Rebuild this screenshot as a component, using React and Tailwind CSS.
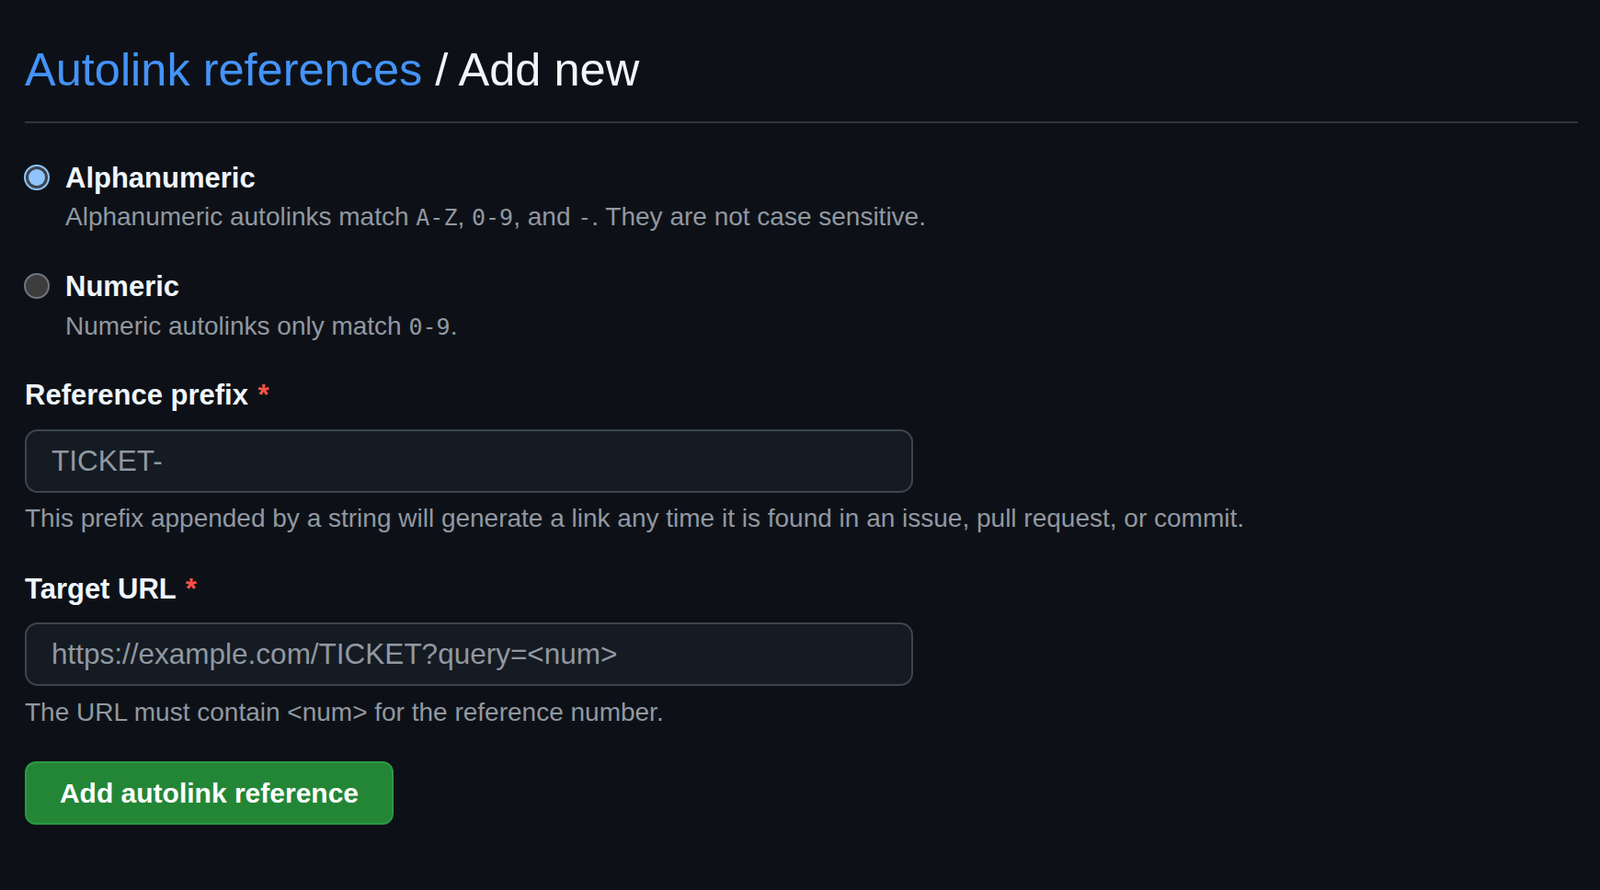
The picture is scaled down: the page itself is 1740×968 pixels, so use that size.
import React from "react";

function Radio({ checked }) {
  if (checked) {
    return (
      <span className="ml-[-1px] mt-[3px] flex h-[28px] w-[28px] shrink-0 items-center justify-center rounded-full border-2 border-[#8fc4ff] bg-[#3d444d]">
        <span className="h-[18px] w-[18px] rounded-full bg-[#8fc4ff]" />
      </span>
    );
  }
  return (
    <span className="ml-[-1px] mt-[3px] h-[28px] w-[28px] shrink-0 rounded-full border-2 border-[#6e7681] bg-[#3d3d3d]" />
  );
}

function Code({ children }) {
  return <span className="font-['DejaVu_Sans_Mono',monospace] text-[25px]">{children}</span>;
}

export default function App() {
  return (
    <div className="min-h-[968px] bg-[#0d1117] pl-[27px] pr-[24px] pt-[46px] font-['Liberation_Sans',Arial,sans-serif] text-[#f0f6fc]">
      <h1 className="border-b-2 border-[#2f353d] pb-[26px] text-[50.5px] leading-[60px] font-normal">
        <span className="text-[#4493f8]">Autolink references</span>
        <span> / Add new</span>
      </h1>

      <div className="mt-[42px] flex items-start gap-[17px]">
        <Radio checked />
        <div>
          <div className="text-[31px] font-bold leading-[36px]">Alphanumeric</div>
          <div className="mt-[6px] text-[28px] leading-[36px] text-[#9198a1]">
            Alphanumeric autolinks match <Code>A-Z</Code>, <Code>0-9</Code>, and <Code>-</Code>. They are not case sensitive.
          </div>
        </div>
      </div>

      <div className="mt-[39px] flex items-start gap-[17px]">
        <Radio />
        <div>
          <div className="text-[31px] font-bold leading-[36px]">Numeric</div>
          <div className="mt-[7px] text-[28px] leading-[36px] text-[#9198a1]">
            Numeric autolinks only match <Code>0-9</Code>.
          </div>
        </div>
      </div>

      <div className="mt-[38px]">
        <div className="text-[31px] font-bold leading-[36px]">
          Reference prefix <span className="ml-[2px] text-[#f85149]">*</span>
        </div>
        <input
          className="mt-[19px] block h-[69px] w-[966px] rounded-[14px] border-2 border-[#3d444d] bg-[#151b23] px-[27px] text-[31.5px] text-[#f0f6fc] outline-none placeholder:text-[#9198a1]"
          placeholder="TICKET-"
        />
        <div className="mt-[10px] text-[28px] leading-[36px] text-[#9198a1]">
          This prefix appended by a string will generate a link any time it is found in an issue, pull request, or commit.
        </div>
      </div>

      <div className="mt-[41px]">
        <div className="text-[31px] font-bold leading-[36px]">
          Target URL <span className="ml-[2px] text-[#f85149]">*</span>
        </div>
        <input
          className="mt-[18px] block h-[69px] w-[966px] rounded-[14px] border-2 border-[#3d444d] bg-[#151b23] px-[27px] text-[31.5px] text-[#f0f6fc] outline-none placeholder:text-[#9198a1]"
          placeholder="https://example.com/TICKET?query=<num>"
        />
        <div className="mt-[11px] text-[28px] leading-[36px] text-[#9198a1]">
          The URL must contain &lt;num&gt; for the reference number.
        </div>
      </div>

      <button className="mt-[35px] flex h-[69px] w-[401px] items-center justify-center rounded-[12px] border-2 border-[#2c9a41] bg-[#238636] text-[30px] font-bold text-white">
        Add autolink reference
      </button>
    </div>
  );
}
